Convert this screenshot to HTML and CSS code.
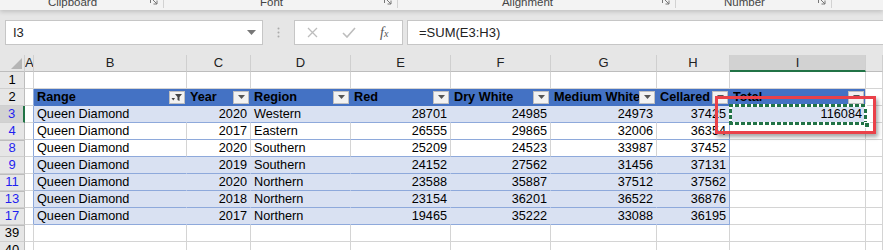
FILE: index.html
```html
<!DOCTYPE html>
<html lang="en">
<head>
    <meta charset="UTF-8">
    <title>Wine Sales - Excel</title>
    <link rel="stylesheet" href="styles.css">
</head>
<body>
    <div class="ribbon">
        <div class="group g-clip"><span class="group-label">Clipboard</span><span class="launcher"><svg width="8" height="8" viewBox="0 0 8 8"><path d="M0.5 6V0.5H6M2 2L7 7M7 3.5V7H3.5" fill="none" stroke="#777" stroke-width="1"/></svg></span><span class="sep"></span></div>
        <div class="group g-font"><span class="group-label">Font</span><span class="launcher"><svg width="8" height="8" viewBox="0 0 8 8"><path d="M0.5 6V0.5H6M2 2L7 7M7 3.5V7H3.5" fill="none" stroke="#777" stroke-width="1"/></svg></span><span class="sep"></span></div>
        <div class="group g-align"><span class="group-label">Alignment</span><span class="launcher"><svg width="8" height="8" viewBox="0 0 8 8"><path d="M0.5 6V0.5H6M2 2L7 7M7 3.5V7H3.5" fill="none" stroke="#777" stroke-width="1"/></svg></span><span class="sep"></span></div>
        <div class="group g-num"><span class="group-label">Number</span><span class="launcher"><svg width="8" height="8" viewBox="0 0 8 8"><path d="M0.5 6V0.5H6M2 2L7 7M7 3.5V7H3.5" fill="none" stroke="#777" stroke-width="1"/></svg></span><span class="sep"></span></div>
    </div>

    <div class="formula-bar">
        <div class="name-box">
            <span class="name-text">I3</span>
            <svg width="9" height="5" viewBox="0 0 9 5"><path d="M0 0H9L4.5 5Z" fill="#777"/></svg>
        </div>
        <div class="dots">
            <svg width="3" height="11" viewBox="0 0 3 11"><circle cx="1.5" cy="1.5" r="1" fill="#aaa"/><circle cx="1.5" cy="5.5" r="1" fill="#aaa"/><circle cx="1.5" cy="9.5" r="1" fill="#aaa"/></svg>
        </div>
        <div class="fx-buttons">
            <span class="fx-slot"><svg width="11" height="11" viewBox="0 0 11 11"><path d="M1 1L10 10M10 1L1 10" stroke="#bdbdbd" stroke-width="1.3" fill="none"/></svg></span>
            <span class="fx-slot"><svg width="14" height="11" viewBox="0 0 14 11"><path d="M1 6L5 10L13 1" stroke="#bdbdbd" stroke-width="1.6" fill="none"/></svg></span>
            <span class="fx-slot"><i class="fx">f<span>x</span></i></span>
        </div>
        <div class="formula-input">=SUM(E3:H3)</div>
    </div>

    <div class="sheet">
        <div class="row colheads">
            <div class="corner"><svg width="11" height="11" viewBox="0 0 11 11"><path d="M11 0V11H0Z" fill="#b5b5b5"/></svg></div>
            <div>A</div><div>B</div><div>C</div><div>D</div><div>E</div><div>F</div><div>G</div><div>H</div><div class="sel">I</div><div></div>
        </div>

        <div class="row">
            <div class="rh">1</div>
            <div></div><div></div><div></div><div></div><div></div><div></div><div></div><div></div><div></div><div></div>
        </div>

        <div class="row">
            <div class="rh">2</div>
            <div class="edge"></div>
            <div class="th"><span class="th-text">Range</span><span class="fb"><svg width="12" height="9" viewBox="0 0 12 9"><path d="M4 1H11L8.5 4V8L6.5 7V4Z" fill="#444"/><path d="M0.5 5H4L2.25 7.5Z" fill="#444"/></svg></span></div>
            <div class="th"><span class="th-text">Year</span><span class="fb"><svg width="7" height="4" viewBox="0 0 7 4"><path d="M0 0H7L3.5 4Z" fill="#555"/></svg></span></div>
            <div class="th"><span class="th-text">Region</span><span class="fb"><svg width="7" height="4" viewBox="0 0 7 4"><path d="M0 0H7L3.5 4Z" fill="#555"/></svg></span></div>
            <div class="th"><span class="th-text">Red</span><span class="fb"><svg width="7" height="4" viewBox="0 0 7 4"><path d="M0 0H7L3.5 4Z" fill="#555"/></svg></span></div>
            <div class="th"><span class="th-text">Dry White</span><span class="fb"><svg width="7" height="4" viewBox="0 0 7 4"><path d="M0 0H7L3.5 4Z" fill="#555"/></svg></span></div>
            <div class="th"><span class="th-text">Medium White</span><span class="fb"><svg width="7" height="4" viewBox="0 0 7 4"><path d="M0 0H7L3.5 4Z" fill="#555"/></svg></span></div>
            <div class="th"><span class="th-text">Cellared</span><span class="fb"><svg width="7" height="4" viewBox="0 0 7 4"><path d="M0 0H7L3.5 4Z" fill="#555"/></svg></span></div>
            <div class="th th-last"><span class="th-text">Total</span><span class="fb"><svg width="7" height="4" viewBox="0 0 7 4"><path d="M0 0H7L3.5 4Z" fill="#555"/></svg></span></div>
            <div></div>
        </div>

        <div class="row band">
            <div class="rh f sel">3</div>
            <div class="edge"></div>
            <div class="td">Queen Diamond</div><div class="td n">2020</div><div class="td">Western</div>
            <div class="td n">28701</div><div class="td n">24985</div><div class="td n">24973</div><div class="td n last">37425</div>
            <div class="td n total">116084</div>
            <div></div>
        </div>

        <div class="row">
            <div class="rh f">4</div>
            <div class="edge"></div>
            <div class="td">Queen Diamond</div><div class="td n">2017</div><div class="td">Eastern</div>
            <div class="td n">26555</div><div class="td n">29865</div><div class="td n">32006</div><div class="td n last">36354</div>
            <div></div><div></div>
        </div>

        <div class="row">
            <div class="rh f gap">8</div>
            <div class="edge"></div>
            <div class="td">Queen Diamond</div><div class="td n">2020</div><div class="td">Southern</div>
            <div class="td n">25209</div><div class="td n">24523</div><div class="td n">33987</div><div class="td n last">37452</div>
            <div></div><div></div>
        </div>

        <div class="row band">
            <div class="rh f">9</div>
            <div class="edge"></div>
            <div class="td">Queen Diamond</div><div class="td n">2019</div><div class="td">Southern</div>
            <div class="td n">24152</div><div class="td n">27562</div><div class="td n">31456</div><div class="td n last">37131</div>
            <div></div><div></div>
        </div>

        <div class="row band">
            <div class="rh f gap">11</div>
            <div class="edge"></div>
            <div class="td">Queen Diamond</div><div class="td n">2020</div><div class="td">Northern</div>
            <div class="td n">23588</div><div class="td n">35887</div><div class="td n">37512</div><div class="td n last">37562</div>
            <div></div><div></div>
        </div>

        <div class="row band">
            <div class="rh f gap">13</div>
            <div class="edge"></div>
            <div class="td">Queen Diamond</div><div class="td n">2018</div><div class="td">Northern</div>
            <div class="td n">23154</div><div class="td n">36201</div><div class="td n">36522</div><div class="td n last">36876</div>
            <div></div><div></div>
        </div>

        <div class="row band">
            <div class="rh f gap">17</div>
            <div class="edge"></div>
            <div class="td">Queen Diamond</div><div class="td n">2017</div><div class="td">Northern</div>
            <div class="td n">19465</div><div class="td n">35222</div><div class="td n">33088</div><div class="td n last">36195</div>
            <div></div><div></div>
        </div>

        <div class="row">
            <div class="rh gap">39</div>
            <div></div><div></div><div></div><div></div><div></div><div></div><div></div><div></div><div></div><div></div>
        </div>

        <div class="row">
            <div class="rh">40</div>
            <div></div><div></div><div></div><div></div><div></div><div></div><div></div><div></div><div></div><div></div>
        </div>

        <!-- copy selection around I3 and the highlight box -->
        <div class="ants"><span class="handle"></span></div>
        <div class="callout"></div>
    </div>
</body>
</html>
```

FILE: styles.css
```css
body { margin: 0; font-family: "Liberation Sans", Arial, sans-serif; background: #fff; width: 883px; height: 250px; overflow: hidden; }

/* ribbon group labels, cut off at the top */
.ribbon { display: flex; height: 10px; background: #f3f3f3; position: relative; z-index: 1; box-shadow: 0 2px 4px rgba(0, 0, 0, 0.16); }
.group { display: flex; align-items: flex-start; }
.g-clip { width: 164px; }
.g-font { width: 234px; }
.g-align { width: 278px; }
.g-num { width: 156px; }
.group-label { flex: 1; text-align: center; font-size: 11.5px; line-height: 12px; margin-top: -4px; color: #444; }
.launcher { width: 18px; display: flex; justify-content: center; margin-top: -3px; }
.sep { width: 1px; height: 8px; background: #d2d2d2; }

/* name box + formula bar */
.formula-bar { display: flex; align-items: center; height: 45px; padding-left: 5px; background: #e6e6e6; }
.name-box { box-sizing: border-box; width: 258px; height: 25px; display: flex; align-items: center; justify-content: space-between; padding: 0 6px 0 7px; background: #fff; border: 1px solid #c6c6c6; }
.name-text { font-size: 13px; color: #222; }
.dots { width: 31px; display: flex; justify-content: center; }
.fx-buttons { box-sizing: border-box; width: 109px; height: 25px; display: flex; background: #fff; border: 1px solid #c6c6c6; }
.fx-slot { flex: 1; display: flex; align-items: center; justify-content: center; }
.fx { font-family: "Liberation Serif", "Times New Roman", serif; font-size: 14px; color: #555; }
.fx span { font-size: 10px; }
.formula-input { box-sizing: border-box; flex: 1; height: 25px; margin-left: 4px; padding-left: 11px; line-height: 23px; font-size: 13px; color: #222; background: #fff; border: 1px solid #c6c6c6; border-right: none; }

/* grid */
.sheet { position: relative; }
.row { display: grid; grid-template-columns: 25px 9px 153px 64px 100px 100px 100px 106px 73px 136px 1fr; height: 17px; }
.row > div { box-sizing: border-box; border-right: 1px solid #d4d4d4; border-bottom: 1px solid #d4d4d4; font-size: 12.7px; line-height: 16px; padding: 0 3px; white-space: nowrap; overflow: hidden; color: #000; }

.colheads > div { background: #e6e6e6; border-right-color: #cfcfcf; border-bottom-color: #bdbdbd; text-align: center; font-size: 13px; color: #222; padding: 0; }
.colheads .sel { background: #d2d2d2; border-bottom: 2px solid #217346; }
.colheads .corner { display: flex; align-items: flex-end; justify-content: flex-end; padding: 0 2px 2px 0; }

.rh { background: #e6e6e6; text-align: center; padding: 0 !important; border-right-color: #bdbdbd !important; border-bottom-color: #cfcfcf !important; font-size: 13px !important; }
.rh.f { color: #1f1ff0; }
.rh.sel { background: #d2d2d2; border-right: 2px solid #217346 !important; }
.rh.gap { box-shadow: inset 0 1px 0 #bdbdbd; }

/* table */
.edge { border-right-color: #8ea9db !important; }
.th { display: flex; align-items: center; background: #4472c4; color: #fff; font-weight: bold; padding: 0 1px 0 3px !important; border-right-color: #4472c4 !important; border-bottom-color: #4472c4 !important; }
.th-text { flex: 1; overflow: hidden; }
.th-last { border-right-color: #d4d4d4 !important; }
.fb { box-sizing: border-box; flex: none; width: 16px; height: 13px; display: flex; align-items: center; justify-content: center; background: #f2f2f2; border: 1px solid #bfbfbf; }
.td { border-bottom-color: #8ea9db !important; }
.band .td { background: #d9e1f2; border-right-color: #d9e1f2; }
.td.last { border-right-color: #8ea9db !important; }
.n { text-align: right; }

.ants { position: absolute; left: 729px; top: 49px; width: 138px; height: 21px;
    background:
        repeating-linear-gradient(90deg, #217346 0 4px, #fff 4px 6px) top left / 100% 3px no-repeat,
        repeating-linear-gradient(90deg, #217346 0 4px, #fff 4px 6px) bottom left / 100% 3px no-repeat,
        repeating-linear-gradient(0deg, #217346 0 4px, #fff 4px 6px) top left / 3px 100% no-repeat,
        repeating-linear-gradient(0deg, #217346 0 4px, #fff 4px 6px) top right / 3px 100% no-repeat; }
.handle { position: absolute; right: -3px; bottom: -3px; box-sizing: border-box; width: 6px; height: 6px; background: #217346; border: 1px solid #fff; }
.callout { position: absolute; left: 715px; top: 41px; width: 161px; height: 38px; box-sizing: border-box; border: 3px solid #ea4149; box-shadow: 2px 3px 4px rgba(0, 0, 0, 0.35); }
```
